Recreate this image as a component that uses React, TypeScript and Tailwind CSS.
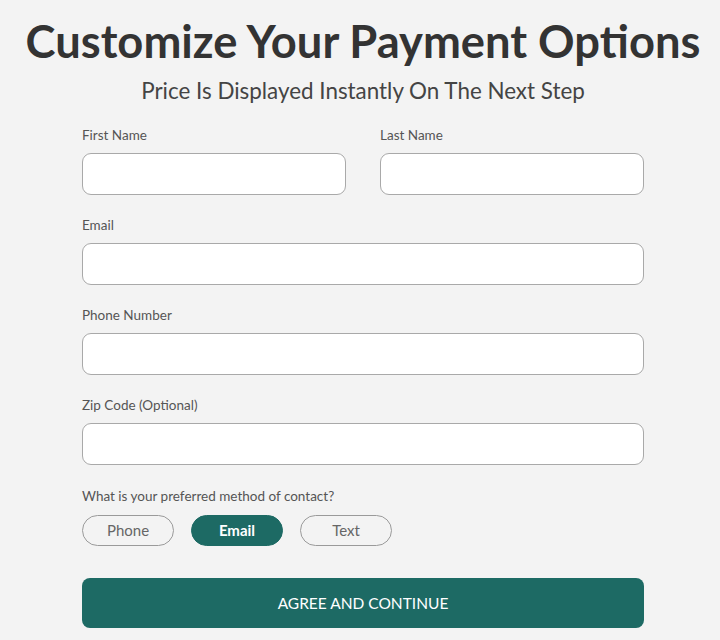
import { useState } from "react";

function Field({ label, className = "" }: { label: string; className?: string }) {
  return (
    <div className={"flex flex-col " + className}>
      <label className="text-[13.5px] leading-[18px] text-[#555] mb-[9px]">{label}</label>
      <input
        type="text"
        className="h-[42px] w-full rounded-[9px] border border-[#a9a9a9] bg-white px-3 outline-none"
      />
    </div>
  );
}

export default function App() {
  const [method, setMethod] = useState("Email");
  const methods = ["Phone", "Email", "Text"];

  return (
    <div
      className="min-h-[640px] w-[720px] bg-[#f3f3f3] text-[#333]"
      style={{ fontFamily: "Lato, 'Open Sans', sans-serif" }}
    >
      <div className="pt-[10px] pl-[6px] text-center">
        <h1 className="text-[45.3px] leading-[62px] font-bold text-[#333]">Customize Your Payment Options</h1>
        <p className="mt-[4px] text-[22.4px] leading-[30px] text-[#444]">Price Is Displayed Instantly On The Next Step</p>
      </div>

      <div className="mx-[82px] w-[562px] mt-[20px]">
        <div className="grid grid-cols-2 gap-[34px]">
          <Field label="First Name" />
          <Field label="Last Name" />
        </div>
        <Field label="Email" className="mt-[21px]" />
        <Field label="Phone Number" className="mt-[21px]" />
        <Field label="Zip Code (Optional)" className="mt-[21px]" />

        <p className="mt-[22px] text-[13.5px] leading-[18px] text-[#555]">What is your preferred method of contact?</p>
        <div className="mt-[10px] flex gap-[17px]">
          {methods.map((m) => (
            <button
              key={m}
              onClick={() => setMethod(m)}
              className={
                method === m
                  ? "h-[31px] w-[92px] rounded-full border border-[#1d6a64] bg-[#1d6a64] text-[15px] font-bold text-white"
                  : "h-[31px] w-[92px] rounded-full border border-[#9a9a9a] bg-transparent text-[15px] text-[#666]"
              }
            >
              {m}
            </button>
          ))}
        </div>

        <button className="mt-[32px] h-[50px] w-full rounded-[8px] bg-[#1d6a64] pt-[2px] text-[15.5px] text-white">
          AGREE AND CONTINUE
        </button>
      </div>
    </div>
  );
}
